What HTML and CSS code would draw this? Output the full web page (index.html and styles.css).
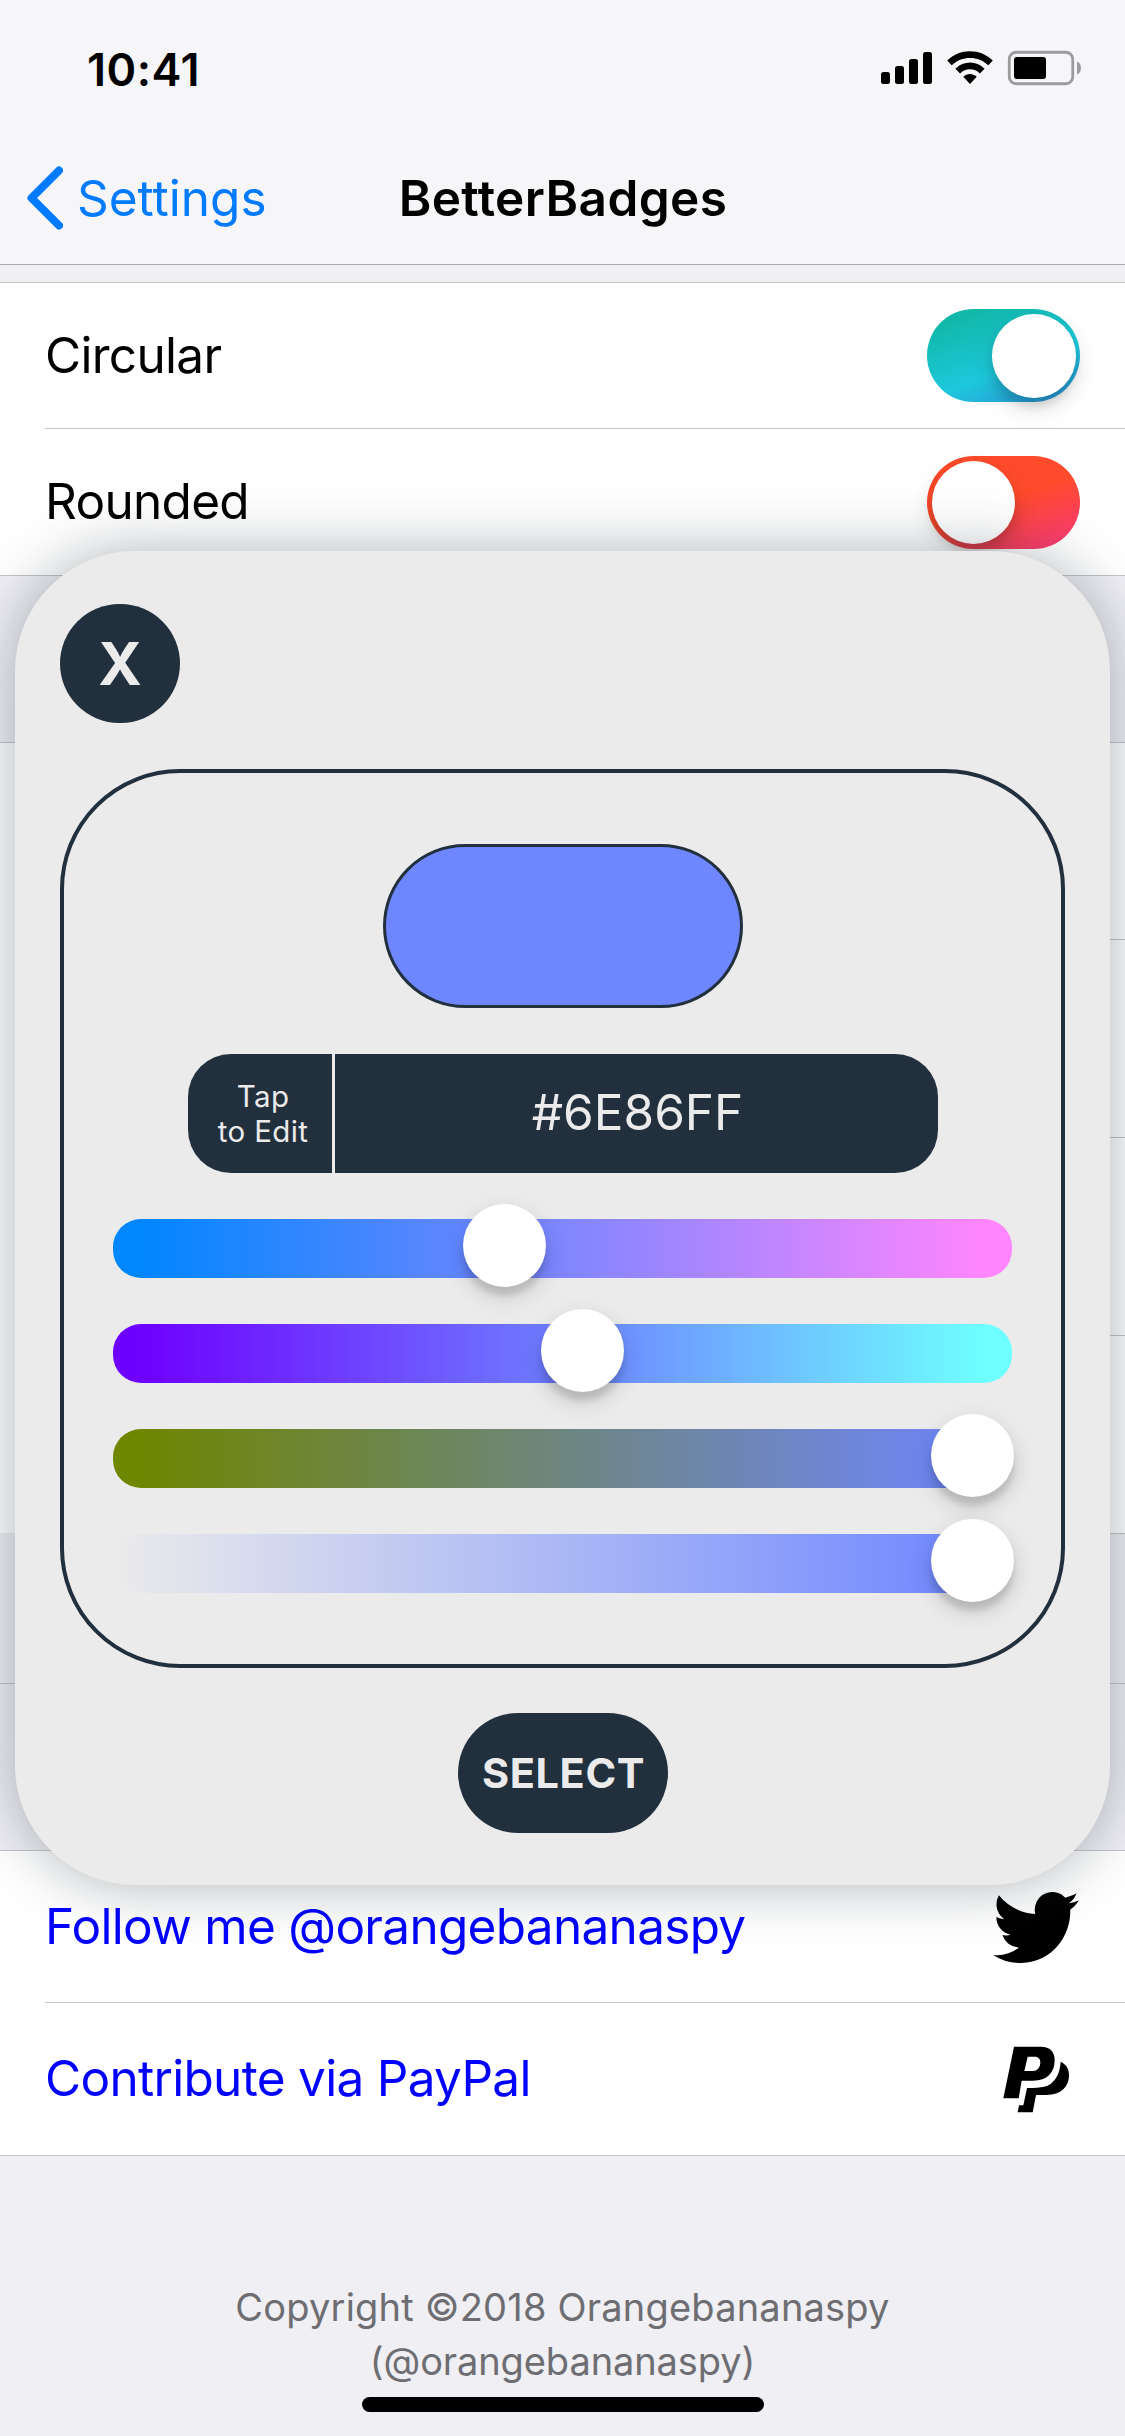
FILE: index.html
```html
<!DOCTYPE html>
<html lang="en">
<head>
<meta charset="utf-8">
<title>BetterBadges</title>
<link rel="stylesheet" href="styles.css">
</head>
<body>
<header class="top">
  <div class="status">
    <span class="time">10:41</span>
    <svg class="status-icons" viewBox="881 50 202 38" width="202" height="38">
      <rect x="881" y="73" width="9" height="12" rx="2.5"/>
      <rect x="895" y="67" width="9" height="18" rx="2.5"/>
      <rect x="909" y="60" width="9" height="25" rx="2.5"/>
      <rect x="923" y="53" width="9" height="32" rx="2.5"/>
      <path d="M947.2 61.6C959.5 49 980.5 49 992.8 61.6L988.3 66.3C978.5 56.5 961.5 56.5 951.7 66.3Z"/>
      <path d="M955.4 69.7C963.6 61.3 976.4 61.3 984.6 69.7L979.9 74.4C974.5 69 965.5 69 960.1 74.4Z"/>
      <path d="M963.3 77.8C967.1 74.2 972.9 74.2 976.7 77.8L970 85Z"/>
      <rect x="1009.25" y="53.25" width="63.5" height="31.5" rx="7" fill="none" stroke="#9b9b9d" stroke-width="2.8"/>
      <rect x="1014" y="58" width="32" height="22" rx="3"/>
      <path d="M1077 62.5C1082.3 64.5 1082.3 73.5 1077 75.5Z" fill="#9b9b9d"/>
    </svg>
  </div>
  <nav class="nav">
    <a class="back">
      <svg viewBox="0 0 36 64" width="36" height="64"><path d="M32 4.5L4.5 32L32 59.5" fill="none" stroke="#007aff" stroke-width="8" stroke-linecap="round" stroke-linejoin="round"/></svg>
      <span class="back-label">Settings</span>
    </a>
    <h1 class="title">BetterBadges</h1>
  </nav>
</header>
<main>
  <section class="group first">
    <div class="row"><span class="label">Circular</span><span class="switch on"><span class="knob"></span></span></div>
    <div class="row"><span class="label">Rounded</span><span class="switch off"><span class="knob"></span></span></div>
  </section>
  <section class="group middle">
    <div class="row"></div>
    <div class="row"></div>
    <div class="row"></div>
    <div class="row"></div>
    <div class="row tinted"></div>
  </section>
  <section class="group links">
    <div class="row"><a class="label link">Follow me @orangebananaspy</a>
      <svg class="bird" viewBox="0 2.25 24 19.5" width="86" height="71" preserveAspectRatio="none"><path d="M23.953 4.57a10 10 0 01-2.825.775 4.958 4.958 0 002.163-2.723c-.951.555-2.005.959-3.127 1.184a4.92 4.92 0 00-8.384 4.482C7.69 8.095 4.067 6.13 1.64 3.162a4.822 4.822 0 00-.666 2.475c0 1.71.87 3.213 2.188 4.096a4.904 4.904 0 01-2.228-.616v.06a4.923 4.923 0 003.946 4.827 4.996 4.996 0 01-2.212.085 4.936 4.936 0 004.604 3.417 9.867 9.867 0 01-6.102 2.105c-.39 0-.779-.023-1.17-.067a13.995 13.995 0 007.557 2.209c9.053 0 13.998-7.496 13.998-13.985 0-.21 0-.42-.015-.63A9.935 9.935 0 0024 4.59z"/></svg>
    </div>
    <div class="row"><a class="label link">Contribute via PayPal</a>
      <svg class="pp" viewBox="190 558 200 201" width="66.7" height="67"><path fill-rule="evenodd" d="M223 560H305C330 560 345 575 345 600C345 637 323 662 280 662H246L237 715H191ZM264 590L254 633H280C295 633 302 620 302 607C302 597 296 590 285 590Z"/><path d="M363 605C378 612 388 625 388 645C388 680 365 705 320 705H289L279 757H234L238 736H251L262 684H278C320 683 330 677 344 661C356 646 361 630 363 605Z"/></svg>
    </div>
  </section>
  <footer class="copyright"><span class="owner">Copyright ©2018 Orangebananaspy</span><span class="handle">(@orangebananaspy)</span></footer>
  <div class="home-bar"></div>
</main>

<div class="picker">
  <button class="close">X</button>
  <div class="panel">
    <div class="preview"></div>
    <div class="hex">
      <div class="hint"><span>Tap</span><span>to Edit</span></div>
      <div class="value">#6E86FF</div>
    </div>
    <div class="slider red"><span class="thumb" style="left:350px"></span></div>
    <div class="slider green"><span class="thumb" style="left:428px"></span></div>
    <div class="slider blue"><span class="thumb" style="left:818px"></span></div>
    <div class="slider alpha"><span class="thumb" style="left:818px"></span></div>
  </div>
  <button class="select">SELECT</button>
</div>
</body>
</html>
```
FILE: styles.css
```css
*{box-sizing:border-box}
body{margin:0;width:1125px;height:2436px;overflow:hidden;position:relative;background:#efeff4;color:#000;font-family:Inter,"Liberation Sans",sans-serif;font-size:49.5px}
.top{height:265px;background:#f6f6f8;border-bottom:1px solid #a9a9b0}
.status{height:132px;padding:6px 42px 0 87px;display:flex;align-items:center;justify-content:space-between}
.status-icons{margin-top:-2px}
.time{font-size:45px;font-weight:600;letter-spacing:.5px}
.nav{height:132px;display:grid;grid-template-columns:1fr auto 1fr;align-items:center;padding:0 27px}
.back{display:flex;align-items:center;gap:14px;color:#007aff}
.back svg{display:block}
.title{margin:0;padding-left:1px;font-size:49.5px;font-weight:600;letter-spacing:.4px}
.group{background:#fff;border-top:1px solid #c3c3c8;border-bottom:1px solid #c3c3c8}
.row{display:flex;align-items:center;justify-content:space-between;margin-left:45px;padding-right:45px}
.row+.row{border-top:1px solid #c3c3c8}
.label{letter-spacing:-.7px;padding-bottom:2px}
.first{margin-top:17px}
.first .row{height:145px}
.first .row+.row{height:147px}
.middle{margin-top:166px}
.middle .row{height:196px}
.middle .row+.row{height:198px}
.middle .row.tinted{height:150px;background:#efeff4;box-shadow:-45px 0 0 #efeff4}
.links{margin-top:166px}
.links .row{height:151px}
.links .row+.row{height:153px}
.link{color:#00f}
.bird{margin:2px 1px 0 0}
.pp{margin-right:10px}

.switch{width:153px;height:93px;border-radius:47px;padding:5px 4.5px;display:flex}
.on{justify-content:flex-end;background:linear-gradient(160deg,#10b7a5 10%,#1ec8dc 60%,#2b8fd8 100%)}
.off{background:linear-gradient(160deg,#ff4b2b 48%,#f93a74 95%)}
.knob,.thumb{width:83.5px;height:83.5px;border-radius:50%;background:#fff}
.knob{box-shadow:0 9px 24px rgba(0,0,0,.15),0 9px 9px rgba(0,0,0,.1)}
.thumb{position:absolute;top:-15.5px;margin-left:-.5px;box-shadow:0 9px 24px rgba(0,0,0,.15),0 9px 6px rgba(0,0,0,.12)}

.copyright{margin-top:124px;display:flex;flex-direction:column;align-items:center;font-size:38px;line-height:54px;color:#6d6d72}
.owner{letter-spacing:.2px}
.handle{letter-spacing:-.1px}
.home-bar{width:402px;height:15px;border-radius:8px;background:#000;margin:9px auto 0}

.picker{position:absolute;left:15px;top:551px;width:1095px;height:1334px;border-radius:120px;background:#ebebeb;box-shadow:0 0 60px rgba(34,48,60,.37);padding:53px 45px 52px;display:flex;flex-direction:column;align-items:center}
button{border:0;padding:0;font-family:inherit;background:#22303e;color:#ebebeb;display:flex;align-items:center;justify-content:center}
.close{width:120px;height:119px;border-radius:60px;align-self:flex-start;font-size:59px;font-weight:700}
.panel{width:1005px;height:899px;margin-top:46px;border:4px solid #22303e;border-radius:120px;display:flex;flex-direction:column;align-items:center;padding-top:71px}
.preview{width:360px;height:164px;border-radius:82px;border:3px solid #22303e;background:#6e86ff}
.hex{width:750px;height:119px;margin-top:46px;margin-bottom:46px;border-radius:43px;background:#22303e;color:#ebebeb;display:flex}
.hint{width:147px;padding-left:7px;border-right:3px solid #ebebeb;display:flex;flex-direction:column;align-items:center;justify-content:center;font-size:29.5px;line-height:35px;letter-spacing:.4px}
.value{flex:1;padding:0 0 4px 3px;display:flex;align-items:center;justify-content:center}
.slider{position:relative;width:899px;height:59px;border-radius:28px;margin-bottom:46px}
.red{background:linear-gradient(90deg,#0086ff 3%,#ff86ff 97%)}
.green{background:linear-gradient(90deg,#6e00ff 3%,#6effff 97%)}
.blue{background:linear-gradient(90deg,#6e8600 3%,#6e86ff 97%)}
.alpha{background:linear-gradient(90deg,rgba(110,134,255,0) 0%,#6e86ff 97%)}
.select{width:210px;height:120px;margin-top:45px;padding-left:2px;border-radius:60px;font-size:41.5px;font-weight:700;letter-spacing:.6px}
```
